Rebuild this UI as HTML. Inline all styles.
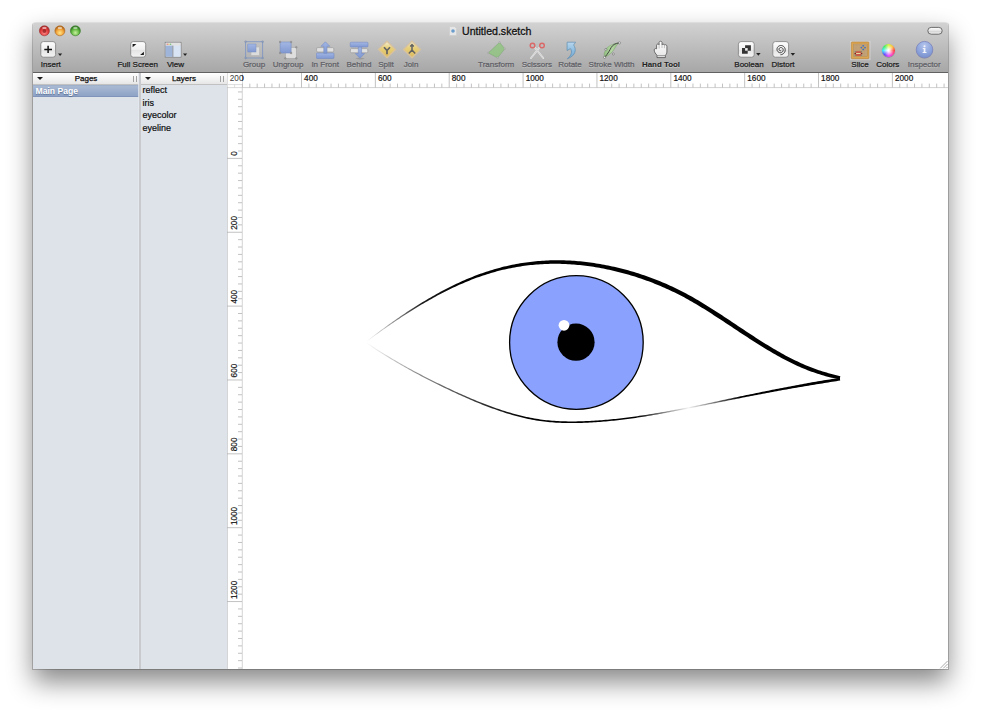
<!DOCTYPE html>
<html><head><meta charset="utf-8">
<style>
*{margin:0;padding:0;box-sizing:border-box}
html,body{width:1000px;height:716px;overflow:hidden;background:#fff;font-family:"Liberation Sans",sans-serif}
.abs{position:absolute}
#shadow{position:absolute;left:33px;top:22px;width:915px;height:647px;box-shadow:0 13px 26px rgba(0,0,0,0.47);border-radius:4px 4px 0 0}
#win{position:absolute;left:33px;top:22px;width:915px;height:647px;overflow:hidden;border-radius:4px 4px 0 0;background:#fff}
#tb{position:absolute;left:33px;top:22px;width:915px;height:51px;background:linear-gradient(#e9e9e9 0px,#d2d2d2 1px,#bdbdbd 50%,#a8a8a8 49px);border-bottom:1px solid #616161;border-radius:4px 4px 0 0}
.lbl{position:absolute;width:80px;font-size:8px;line-height:9px;color:#1c1c1c;-webkit-text-stroke:0.25px currentColor;white-space:nowrap;text-align:center;text-shadow:0 1px 0 rgba(255,255,255,0.35)}
.dis{color:#5f5f66}
.bold{font-weight:bold;color:#222;-webkit-text-stroke:0;font-size:7.9px}
#title{position:absolute;top:24.5px;left:462px;font-size:10.6px;line-height:12px;color:#111;-webkit-text-stroke:0.3px currentColor;text-shadow:0 1px 0 rgba(255,255,255,0.4)}
#pages{position:absolute;left:33px;top:73px;width:106px;height:596px;background:#dee3ea}
#pdiv{position:absolute;left:139px;top:73px;width:1.8px;height:596px;background:#c9cace;box-shadow:-0.8px 0 0 #e4e8ef,0.8px 0 0 #e4e8ef}
#layers{position:absolute;left:140.8px;top:73px;width:87.2px;height:596px;background:#dee3ea;border-right:1px solid #a9abae}
.hdr{position:absolute;left:0;top:0;width:100%;height:11.5px;background:linear-gradient(#ffffff,#f3f3f3 50%,#e6e6e6);border-bottom:1px solid #c1c1c1;font-size:8px;text-align:center;line-height:11px;color:#0c0c0c;-webkit-text-stroke:0.25px currentColor}
.row{position:absolute;left:1.8px;font-size:9px;line-height:10px;color:#0c0c0c;-webkit-text-stroke:0.2px currentColor}
.tri{position:absolute;left:4px;top:4.4px;width:0;height:0;border-left:3px solid transparent;border-right:3px solid transparent;border-top:3.6px solid #1a1a1a}
.grip{position:absolute;right:3.3px;top:3.4px;width:3.4px;height:5.6px;border-left:0.9px solid #a2a2a2;border-right:0.9px solid #a2a2a2}
#sel{position:absolute;left:0;top:11.5px;width:106px;height:12.5px;background:linear-gradient(#a9b9d3,#8ea3c6);border-top:1px solid #9fb0cb;border-bottom:1px solid #7f94b8}
#sel span{position:absolute;left:2.5px;top:0.5px;font-size:8.6px;font-weight:bold;color:#fff;text-shadow:0 1px 1px rgba(40,60,100,0.5);line-height:11px}
</style></head><body>
<div id="shadow"></div>
<div id="win"></div>
<div class="abs" style="left:32.2px;top:22px;width:916.6px;height:647.8px;border-radius:4px 4px 0 0;border:0.8px solid rgba(0,0,0,0.2);border-top-color:rgba(0,0,0,0.08)"></div>
<div id="tb"></div>
<div id="title">Untitled.sketch</div>
<div id="pages"><div class="hdr">Pages<i class="tri"></i><i class="grip" style="right:2.4px"></i></div><div id="sel"><span>Main Page</span></div></div>
<div id="pdiv"></div>
<div id="layers"><div class="hdr">Layers<i class="tri"></i><i class="grip"></i></div>
  <div class="row" style="top:12px">reflect</div>
  <div class="row" style="top:24.6px">iris</div>
  <div class="row" style="top:37.2px">eyecolor</div>
  <div class="row" style="top:49.8px">eyeline</div>
</div>
<div class="lbl " style="left:10.8px;top:60px">Insert</div>
<div class="lbl " style="left:97.7px;top:60px">Full Screen</div>
<div class="lbl " style="left:135.5px;top:60px">View</div>
<div class="lbl dis" style="left:214.0px;top:60px">Group</div>
<div class="lbl dis" style="left:248.0px;top:60px">Ungroup</div>
<div class="lbl dis" style="left:285.2px;top:60px">In Front</div>
<div class="lbl dis" style="left:319.0px;top:60px">Behind</div>
<div class="lbl dis" style="left:346.0px;top:60px">Split</div>
<div class="lbl dis" style="left:371.0px;top:60px">Join</div>
<div class="lbl dis" style="left:456.2px;top:60px">Transform</div>
<div class="lbl dis" style="left:496.8px;top:60px">Scissors</div>
<div class="lbl dis" style="left:530.0px;top:60px">Rotate</div>
<div class="lbl dis" style="left:571.5px;top:60px">Stroke Width</div>
<div class="lbl bold" style="left:621.0px;top:60px">Hand Tool</div>
<div class="lbl " style="left:709.0px;top:60px">Boolean</div>
<div class="lbl " style="left:743.0px;top:60px">Distort</div>
<div class="lbl " style="left:820.0px;top:60px">Slice</div>
<div class="lbl " style="left:847.8px;top:60px">Colors</div>
<div class="lbl dis" style="left:884.2px;top:60px">Inspector</div>
<svg class="abs" style="left:0;top:0" width="1000" height="716" viewBox="0 0 1000 716">
<defs>
  <linearGradient id="btn" x1="0" y1="0" x2="0" y2="1"><stop offset="0" stop-color="#fdfdfd"/><stop offset="0.5" stop-color="#f0f0f0"/><stop offset="0.55" stop-color="#e4e4e4"/><stop offset="1" stop-color="#f4f4f4"/></linearGradient>
  <linearGradient id="blueg" x1="0" y1="0" x2="0" y2="1"><stop offset="0" stop-color="#9fb6ea"/><stop offset="1" stop-color="#7894d6"/></linearGradient>
  <linearGradient id="yel" x1="0" y1="0" x2="0" y2="1"><stop offset="0" stop-color="#faf4e0"/><stop offset="0.3" stop-color="#f0dc8a"/><stop offset="0.4" stop-color="#ecd274"/><stop offset="1" stop-color="#e2bb52"/></linearGradient>
  <linearGradient id="upg" gradientUnits="userSpaceOnUse" x1="366" y1="0" x2="840" y2="0"><stop offset="0" stop-color="#000" stop-opacity="0"/><stop offset="0.12" stop-color="#000" stop-opacity="0.9"/><stop offset="0.2" stop-color="#000"/><stop offset="1" stop-color="#000"/></linearGradient>
  <linearGradient id="log" gradientUnits="userSpaceOnUse" x1="366" y1="0" x2="840" y2="0"><stop offset="0" stop-color="#000" stop-opacity="0"/><stop offset="0.11" stop-color="#000" stop-opacity="0.45"/><stop offset="0.24" stop-color="#000" stop-opacity="0.8"/><stop offset="0.34" stop-color="#000"/><stop offset="0.57" stop-color="#000"/><stop offset="0.68" stop-color="#000" stop-opacity="0.05"/><stop offset="0.79" stop-color="#000"/><stop offset="1" stop-color="#000"/></linearGradient>
  <radialGradient id="red" cx="0.5" cy="0.7" r="0.65"><stop offset="0" stop-color="#ff8a8a"/><stop offset="0.6" stop-color="#e03c3c"/><stop offset="1" stop-color="#a81e1e"/></radialGradient>
  <radialGradient id="ora" cx="0.5" cy="0.7" r="0.6"><stop offset="0" stop-color="#ffe68a"/><stop offset="0.6" stop-color="#f3a43a"/><stop offset="1" stop-color="#b0661a"/></radialGradient>
  <radialGradient id="grn" cx="0.5" cy="0.7" r="0.6"><stop offset="0" stop-color="#c9f0a0"/><stop offset="0.6" stop-color="#66bb44"/><stop offset="1" stop-color="#2f7a1f"/></radialGradient>
  <radialGradient id="insp" cx="0.5" cy="0.25" r="0.75"><stop offset="0" stop-color="#b4c4ec"/><stop offset="0.6" stop-color="#8ea5dc"/><stop offset="1" stop-color="#7890cc"/></radialGradient>
<linearGradient id="rotg" x1="0" y1="0" x2="0" y2="1"><stop offset="0" stop-color="#b8dcf6"/><stop offset="0.5" stop-color="#86bde8"/><stop offset="1" stop-color="#6aa6d8"/></linearGradient>
<linearGradient id="handg" x1="0" y1="0" x2="0" y2="1"><stop offset="0" stop-color="#ffffff"/><stop offset="1" stop-color="#e4e4e4"/></linearGradient>
<linearGradient id="pillg" x1="0" y1="0" x2="0" y2="1"><stop offset="0" stop-color="#ffffff"/><stop offset="0.45" stop-color="#e8e8e8"/><stop offset="0.55" stop-color="#d4d4d4"/><stop offset="1" stop-color="#f4f4f4"/></linearGradient>
<linearGradient id="leafg" x1="0" y1="0" x2="1" y2="0"><stop offset="0" stop-color="#8cc07a"/><stop offset="0.5" stop-color="#b4dca0"/><stop offset="1" stop-color="#86b874"/></linearGradient>
</defs>
<!-- traffic lights -->
<circle cx="44.4" cy="30.8" r="5.0" fill="url(#red)" stroke="#9a3030" stroke-width="0.6"/>
<circle cx="44.4" cy="31" r="1.9" fill="#8f1e1e" opacity="0.75"/>
<ellipse cx="44.4" cy="27.9" rx="2.2" ry="1.2" fill="#fff" opacity="0.55"/>
<circle cx="59.9" cy="30.8" r="5.0" fill="url(#ora)" stroke="#b06a20" stroke-width="0.6"/>
<ellipse cx="59.9" cy="27.9" rx="2.2" ry="1.2" fill="#fff" opacity="0.55"/>
<circle cx="75.4" cy="30.8" r="5.0" fill="url(#grn)" stroke="#3a7a2a" stroke-width="0.6"/>
<ellipse cx="75.4" cy="27.9" rx="2.2" ry="1.2" fill="#fff" opacity="0.5"/>
<!-- toolbar pill -->
<rect x="927.8" y="27.4" width="14.4" height="6.8" rx="3.4" fill="url(#pillg)" stroke="#5f5f5f" stroke-width="0.9"/>
<!-- doc icon -->
<path d="M449.5,26.5h5l2,2v7h-7z" fill="#e6e6e6" stroke="#c8c8c8" stroke-width="0.5"/>
<circle cx="453" cy="31" r="1.8" fill="#6a9ccc"/>
<!-- Insert -->
<rect x="40.8" y="41.6" width="14.8" height="15.6" rx="2.6" fill="url(#btn)" stroke="#7c7c7c" stroke-width="0.8"/>
<path d="M44.3,49.4H52M48.1,45.7V53" stroke="#111" stroke-width="1.5"/>
<path d="M58,53.4h4.2l-2.1,2.6z" fill="#222"/>
<!-- Full screen -->
<rect x="130.7" y="41.6" width="15" height="15.6" rx="2.6" fill="url(#btn)" stroke="#7c7c7c" stroke-width="0.8"/>
<path d="M132.6,43.9h3.8l-3.8,3.3z M143.9,55h-3.8l3.8,-3.3z" fill="#1a1a1a"/>
<!-- View -->
<rect x="165.2" y="42.3" width="15.8" height="14.8" fill="#dfe6f2" stroke="#7a7a7a" stroke-width="0.8"/>
<rect x="165.6" y="42.7" width="15" height="3" fill="#e2e2e2"/>
<circle cx="167.2" cy="44.2" r="0.7" fill="#e07070"/><circle cx="168.9" cy="44.2" r="0.7" fill="#e0c060"/><circle cx="170.6" cy="44.2" r="0.7" fill="#70c070"/>
<rect x="165.6" y="45.7" width="7" height="11" fill="#9eb4d8"/>
<rect x="173.2" y="45.7" width="7.4" height="11" fill="#d8e4f4"/>
<path d="M172.9,45.7v11.2" stroke="#7a7a7a" stroke-width="0.7"/>
<path d="M183,53.4h4.2l-2.1,2.6z" fill="#222"/>
<!-- Group -->
<g opacity="0.85">
<rect x="245.6" y="41.7" width="17" height="16.3" fill="none" stroke="#7d95c4" stroke-width="1"/>
<rect x="251" y="47" width="8.5" height="8.5" fill="#e3e3e3" stroke="#b5b5b5" stroke-width="0.6"/>
<rect x="247.8" y="44" width="8.2" height="8" fill="url(#blueg)" stroke="#6d87c4" stroke-width="0.5"/>
<g fill="#8ea0c0" stroke="#6a7fa8" stroke-width="0.4"><circle cx="245.6" cy="41.7" r="0.9"/><circle cx="262.6" cy="41.7" r="0.9"/><circle cx="245.6" cy="58" r="0.9"/><circle cx="262.6" cy="58" r="0.9"/></g>
</g>
<!-- Ungroup -->
<g opacity="0.85">
<rect x="285.3" y="47.3" width="11" height="11" fill="#e6e6e6" stroke="#a5a5a5" stroke-width="0.7"/>
<rect x="280.1" y="42" width="11" height="11" fill="url(#blueg)" stroke="#6d87c4" stroke-width="0.6"/>
<g fill="#9a9a9a" stroke="#777" stroke-width="0.4"><circle cx="280.1" cy="42" r="0.9"/><circle cx="291.1" cy="42" r="0.9"/><circle cx="280.1" cy="53" r="0.9"/><circle cx="291.1" cy="53" r="0.9"/><circle cx="296.3" cy="47.3" r="0.9"/><circle cx="296.3" cy="58.3" r="0.9"/><circle cx="285.3" cy="58.3" r="0.9"/></g>
</g>
<!-- In Front -->
<g opacity="0.88">
<rect x="316.6" y="47.6" width="17.2" height="4.4" rx="1.2" fill="#e6e6e6" stroke="#9c9c9c" stroke-width="0.8"/>
<rect x="316.4" y="53" width="17.6" height="5.5" rx="1" fill="url(#blueg)" stroke="#6d87c4" stroke-width="0.6"/>
<path d="M323.8,53.2V46.3H321L325.4,41.8L329.8,46.3H327V53.2Z" fill="url(#blueg)" stroke="#6d87c4" stroke-width="0.6" stroke-linejoin="round"/>
</g>
<!-- Behind -->
<g opacity="0.88">
<rect x="350.4" y="48.6" width="17.4" height="4.2" rx="1.2" fill="#e6e6e6" stroke="#9c9c9c" stroke-width="0.8"/>
<ellipse cx="360" cy="58.6" rx="4.5" ry="0.8" fill="#000" opacity="0.15"/>
<path d="M358.3,46.8V53.6H355.3L359.95,58.2L364.6,53.6H361.6V46.8Z" fill="url(#blueg)" stroke="#6d87c4" stroke-width="0.6" stroke-linejoin="round"/>
<rect x="350.2" y="42.2" width="17.8" height="4.8" rx="1" fill="url(#blueg)" stroke="#6d87c4" stroke-width="0.6"/>
</g>
<!-- Split / Join -->
<g opacity="0.9">
<path d="M387,41.3L395.5,49.5L387,57.8L378.5,49.5z" fill="url(#yel)" stroke="#dcc39a" stroke-width="1.3" stroke-linejoin="round"/>
<path d="M387,54.2V50.5M387,50.5L384,47.2M387,50.5L390,47.2" stroke="#5a5a5a" stroke-width="1.7" fill="none"/>
<path d="M412,41.3L420.5,49.5L412,57.8L403.5,49.5z" fill="url(#yel)" stroke="#dcc39a" stroke-width="1.3" stroke-linejoin="round"/>
<path d="M412,45.5V50M412,50L408.8,53.4M412,50L415.2,53.4M410.2,46.5L412,44.6L413.8,46.5" stroke="#5a5a5a" stroke-width="1.5" fill="none"/>
</g>
<!-- Transform -->
<g opacity="0.8">
<path d="M488.2,53L499.6,42.3L504.8,48.8L497.6,57.8z" fill="#8fc57e" stroke="#6e9f62" stroke-width="0.5"/>
<g fill="#c8c8c8" stroke="#888" stroke-width="0.3"><circle cx="499.6" cy="42.3" r="0.8"/><circle cx="504.8" cy="48.8" r="0.8"/><circle cx="497.6" cy="57.8" r="0.8"/><circle cx="488.2" cy="53" r="0.8"/></g>
</g>
<!-- Scissors -->
<g opacity="0.85">
<path d="M531,58L539.5,47.5M543.2,58L534.8,47.5" stroke="#f2f2f2" stroke-width="1.8" stroke-linecap="round"/>
<path d="M531,58L539.5,47.5M543.2,58L534.8,47.5" stroke="#aaa" stroke-width="0.4"/>
<circle cx="532.5" cy="45.5" r="2.3" fill="none" stroke="#e05a5a" stroke-width="1.4"/>
<circle cx="542" cy="45.5" r="2.3" fill="none" stroke="#e05a5a" stroke-width="1.4"/>
</g>
<!-- Rotate -->
<g opacity="0.85">
<path d="M567.1,42.2H575.6L573.6,45C576.5,49,576.2,55.5,567.3,58.8C571.5,55.5,572.6,51.5,570.4,48.6L567.1,50.6Z" fill="url(#rotg)" stroke="#4f86b0" stroke-width="0.7" stroke-linejoin="round"/>
</g>
<!-- Stroke width -->
<g opacity="0.88">
<path d="M604.5,57.5C603.2,51,606.5,44.5,619.5,42.8C614.8,45,615.2,52.5,604.5,57.5Z" fill="url(#leafg)" stroke="#74a066" stroke-width="0.5"/>
<path d="M604.5,57.5C608.5,53,609.8,50,611.2,47.5C612.6,45,615,43.4,619.5,42.8" fill="none" stroke="#333" stroke-width="1"/>
<g fill="#f4f4f4" stroke="#444" stroke-width="0.5"><circle cx="604.6" cy="57.4" r="1.1"/><circle cx="619.4" cy="42.9" r="1.1"/><circle cx="605.9" cy="49.4" r="1"/><circle cx="613.4" cy="54" r="1"/></g>
</g>
<!-- Hand tool -->
<path d="M657,57.6V55.2C655.5,53.8,654.2,51.8,654.2,50C654.2,48.6,655.5,48.2,656.6,48.8V45.2C656.6,43.8,658.8,43.6,659.1,44.8V42.4C659.1,40.9,662,40.9,662,42.4V44.8C662.3,43.9,664.3,44,664.4,45C664.8,44.4,666.9,44.6,666.9,46.2V52C666.9,53.6,666,54.6,665.4,55.2V57.6Z" fill="url(#handg)" stroke="#4a4a4a" stroke-width="0.75" stroke-linejoin="round"/>
<path d="M657.3,55.6H665.1" stroke="#666" stroke-width="0.6"/>
<path d="M659.1,44.8V48.5M662,44.8V48M664.4,45V48.2" stroke="#888" stroke-width="0.5"/>
<!-- Boolean -->
<rect x="738.4" y="41.6" width="15.8" height="15.6" rx="2.6" fill="url(#btn)" stroke="#7c7c7c" stroke-width="0.8"/>
<path d="M745.1,45.3h5.8v5.4h-5.8z M742,48.1h5.7v5.6h-5.7z" fill="#333"/>
<rect x="745.1" y="48.1" width="2.6" height="2.6" fill="#f0f0f0"/>
<path d="M756.1,53.1h4.5l-2.25,2.7z" fill="#222"/>
<!-- Distort -->
<rect x="772.8" y="41.6" width="15.8" height="15.6" rx="2.6" fill="url(#btn)" stroke="#7c7c7c" stroke-width="0.8"/>
<path d="M780.93,50.44 L780.86,50.49 L780.80,50.53 L780.72,50.57 L780.65,50.60 L780.56,50.63 L780.48,50.65 L780.39,50.66 L780.30,50.67 L780.20,50.67 L780.10,50.65 L780.01,50.63 L779.91,50.60 L779.82,50.57 L779.72,50.52 L779.63,50.46 L779.54,50.40 L779.46,50.32 L779.38,50.24 L779.31,50.15 L779.24,50.05 L779.19,49.95 L779.14,49.84 L779.10,49.72 L779.07,49.60 L779.05,49.47 L779.03,49.34 L779.04,49.21 L779.05,49.07 L779.07,48.94 L779.11,48.81 L779.15,48.67 L779.21,48.54 L779.28,48.42 L779.36,48.29 L779.46,48.18 L779.56,48.07 L779.68,47.97 L779.80,47.87 L779.93,47.79 L780.07,47.72 L780.22,47.65 L780.38,47.60 L780.54,47.57 L780.71,47.54 L780.88,47.53 L781.05,47.53 L781.22,47.55 L781.40,47.58 L781.57,47.63 L781.74,47.69 L781.90,47.77 L782.06,47.86 L782.22,47.97 L782.37,48.09 L782.50,48.22 L782.63,48.36 L782.75,48.52 L782.85,48.69 L782.95,48.86 L783.02,49.05 L783.09,49.25 L783.13,49.45 L783.16,49.65 L783.18,49.86 L783.17,50.07 L783.15,50.29 L783.11,50.50 L783.06,50.71 L782.98,50.92 L782.89,51.12 L782.78,51.32 L782.65,51.51 L782.51,51.69 L782.35,51.86 L782.17,52.01 L781.99,52.16 L781.79,52.28 L781.57,52.40 L781.35,52.49 L781.12,52.57 L780.88,52.63 L780.63,52.67 L780.38,52.68 L780.13,52.68 L779.88,52.66 L779.62,52.62 L779.37,52.55 L779.13,52.47 L778.88,52.36 L778.65,52.23 L778.43,52.09 L778.21,51.92 L778.01,51.74 L777.83,51.54 L777.66,51.32 L777.50,51.09 L777.37,50.84 L777.25,50.58 L777.16,50.31 L777.09,50.04 L777.04,49.75 L777.01,49.46 L777.00,49.17 L777.03,48.87 L777.07,48.58 L777.14,48.29 L777.23,48.00 L777.35,47.72 L777.49,47.45 L777.66,47.19 L777.84,46.94 L778.05,46.71 L778.28,46.49 L778.52,46.29 L778.78,46.11 L779.06,45.95 L779.35,45.81 L779.66,45.69 L779.97,45.61 L780.30,45.54 L780.63,45.50 L780.96,45.49 L781.30,45.51 L781.63,45.55 L781.96,45.63 L782.29,45.72 L782.61,45.85 L782.92,46.00 L783.22,46.18 L783.51,46.39 L783.78,46.61 L784.03,46.87 L784.26,47.14 L784.47,47.43 L784.66,47.74 L784.82,48.06 L784.96,48.40 L785.07,48.75 L785.15,49.12 L785.20,49.48 L785.22,49.86 L785.21,50.24 L785.17,50.61 L785.10,50.99 L784.99,51.35 L784.86,51.72 L784.70,52.07 L784.51,52.41 L784.29,52.73 L784.04,53.04 L783.77,53.32 L783.47,53.59 L783.15,53.83 L782.81,54.05 L782.46,54.24 L782.08,54.40 L781.69,54.53 L781.30,54.63 L780.89,54.69" fill="none" stroke="#2e2e2e" stroke-width="1" stroke-linecap="round"/>
<path d="M790.6,53.1h4.5l-2.25,2.7z" fill="#222"/>
<!-- Slice -->
<rect x="850" y="40.8" width="20.6" height="19.4" fill="#dcdcdc" opacity="0.55"/>
<rect x="851.3" y="42" width="17.6" height="16.7" rx="0.8" fill="#dca650" stroke="#b88236" stroke-width="0.6"/>
<rect x="853.2" y="44" width="14" height="12.6" fill="#c9a97e" stroke="#a88350" stroke-width="0.4"/>
<path d="M853.4,45.6H867M853.4,47.2H867M853.4,48.8H867M853.4,50.4H867M853.4,52H867M853.4,53.6H867M853.4,55.2H867M854.8,44V56.6M856.4,44V56.6M858,44V56.6M859.6,44V56.6M861.2,44V56.6M862.8,44V56.6M864.4,44V56.6M866,44V56.6" stroke="#b4936a" stroke-width="0.3"/>
<rect x="855.6" y="51.2" width="5.6" height="4.7" fill="#c85848"/>
<rect x="855.6" y="53" width="5.6" height="1" fill="#e4dca0"/>
<circle cx="855.3" cy="53.5" r="0.85" fill="#8a1a1a"/><circle cx="861.5" cy="53.5" r="0.85" fill="#8a1a1a"/>
<g fill="#7a8a78"><circle cx="855.3" cy="51.8" r="0.7"/><circle cx="861.5" cy="51.8" r="0.7"/><circle cx="855.3" cy="55.2" r="0.7"/><circle cx="861.5" cy="55.2" r="0.7"/></g>
<rect x="862.4" y="46.8" width="1.6" height="1.6" fill="#e8a030"/>
<g fill="#3f72c0"><circle cx="863.2" cy="45.8" r="0.9"/><circle cx="861.4" cy="47.6" r="0.9"/><circle cx="865" cy="47.6" r="0.9"/><circle cx="863.2" cy="49.4" r="0.9"/></g>
<!-- Colors -->

<!-- Inspector -->
<circle cx="924.5" cy="50.2" r="8.4" fill="#000" opacity="0.12"/><circle cx="924.5" cy="49.7" r="8.3" fill="url(#insp)" stroke="#7c84bc" stroke-width="0.8"/>
<g fill="#f2f4fa"><circle cx="924.5" cy="46.3" r="1.05"/><path d="M922.8,48.1H925.4V52.1H926.5V53H922.6V52.1H923.7V48.9H922.8Z"/></g>

<!-- rulers -->
<rect x="227.5" y="73" width="14.5" height="596" fill="#fff"/>
<rect x="242" y="73" width="706" height="15" fill="#fff"/>
<path d="M242.3,73V669" stroke="#c9c9c9" stroke-width="0.8"/>
<path d="M227,87.6H948" stroke="#c4c4c4" stroke-width="0.8"/>
<path d="M227.64,73V87.5M242.41,83.6V87.5M249.80,83.6V87.5M257.18,83.6V87.5M264.57,83.6V87.5M271.96,83.6V87.5M279.34,83.6V87.5M286.73,83.6V87.5M294.11,83.6V87.5M301.50,73V87.5M308.89,83.6V87.5M316.27,83.6V87.5M323.66,83.6V87.5M331.04,83.6V87.5M338.43,83.6V87.5M345.82,83.6V87.5M353.20,83.6V87.5M360.59,83.6V87.5M367.97,83.6V87.5M375.36,73V87.5M382.75,83.6V87.5M390.13,83.6V87.5M397.52,83.6V87.5M404.90,83.6V87.5M412.29,83.6V87.5M419.68,83.6V87.5M427.06,83.6V87.5M434.45,83.6V87.5M441.83,83.6V87.5M449.22,73V87.5M456.61,83.6V87.5M463.99,83.6V87.5M471.38,83.6V87.5M478.76,83.6V87.5M486.15,83.6V87.5M493.54,83.6V87.5M500.92,83.6V87.5M508.31,83.6V87.5M515.69,83.6V87.5M523.08,73V87.5M530.47,83.6V87.5M537.85,83.6V87.5M545.24,83.6V87.5M552.62,83.6V87.5M560.01,83.6V87.5M567.40,83.6V87.5M574.78,83.6V87.5M582.17,83.6V87.5M589.55,83.6V87.5M596.94,73V87.5M604.33,83.6V87.5M611.71,83.6V87.5M619.10,83.6V87.5M626.48,83.6V87.5M633.87,83.6V87.5M641.26,83.6V87.5M648.64,83.6V87.5M656.03,83.6V87.5M663.41,83.6V87.5M670.80,73V87.5M678.19,83.6V87.5M685.57,83.6V87.5M692.96,83.6V87.5M700.34,83.6V87.5M707.73,83.6V87.5M715.12,83.6V87.5M722.50,83.6V87.5M729.89,83.6V87.5M737.27,83.6V87.5M744.66,73V87.5M752.05,83.6V87.5M759.43,83.6V87.5M766.82,83.6V87.5M774.20,83.6V87.5M781.59,83.6V87.5M788.98,83.6V87.5M796.36,83.6V87.5M803.75,83.6V87.5M811.13,83.6V87.5M818.52,73V87.5M825.91,83.6V87.5M833.29,83.6V87.5M840.68,83.6V87.5M848.06,83.6V87.5M855.45,83.6V87.5M862.84,83.6V87.5M870.22,83.6V87.5M877.61,83.6V87.5M884.99,83.6V87.5M892.38,73V87.5M899.77,83.6V87.5M907.15,83.6V87.5M914.54,83.6V87.5M921.92,83.6V87.5M929.31,83.6V87.5M936.70,83.6V87.5M944.08,83.6V87.5" stroke="#b3b3b3" stroke-width="0.8"/>
<path d="M238,91.93H242M238,99.31H242M238,106.70H242M238,114.08H242M238,121.47H242M238,128.86H242M238,136.24H242M238,143.63H242M238,151.01H242M227,158.40H242M238,165.79H242M238,173.17H242M238,180.56H242M238,187.94H242M238,195.33H242M238,202.72H242M238,210.10H242M238,217.49H242M238,224.87H242M227,232.26H242M238,239.65H242M238,247.03H242M238,254.42H242M238,261.80H242M238,269.19H242M238,276.58H242M238,283.96H242M238,291.35H242M238,298.73H242M227,306.12H242M238,313.51H242M238,320.89H242M238,328.28H242M238,335.66H242M238,343.05H242M238,350.44H242M238,357.82H242M238,365.21H242M238,372.59H242M227,379.98H242M238,387.37H242M238,394.75H242M238,402.14H242M238,409.52H242M238,416.91H242M238,424.30H242M238,431.68H242M238,439.07H242M238,446.45H242M227,453.84H242M238,461.23H242M238,468.61H242M238,476.00H242M238,483.38H242M238,490.77H242M238,498.16H242M238,505.54H242M238,512.93H242M238,520.31H242M227,527.70H242M238,535.09H242M238,542.47H242M238,549.86H242M238,557.24H242M238,564.63H242M238,572.02H242M238,579.40H242M238,586.79H242M238,594.17H242M227,601.56H242M238,608.95H242M238,616.33H242M238,623.72H242M238,631.10H242M238,638.49H242M238,645.88H242M238,653.26H242M238,660.65H242M238,668.03H242" stroke="#b3b3b3" stroke-width="0.8"/>
<g font-family="Liberation Sans" font-size="8.2" fill="#151515" stroke="#151515" stroke-width="0.2"><text x="230.2" y="81.3">200</text><text x="304.1" y="81.3">400</text><text x="378.0" y="81.3">600</text><text x="451.8" y="81.3">800</text><text x="525.7" y="81.3">1000</text><text x="599.5" y="81.3">1200</text><text x="673.4" y="81.3">1400</text><text x="747.3" y="81.3">1600</text><text x="821.1" y="81.3">1800</text><text x="895.0" y="81.3">2000</text></g>
<g font-family="Liberation Sans" font-size="8.2" fill="#151515" stroke="#151515" stroke-width="0.2"><text transform="translate(236.5,155.8) rotate(-90)">0</text><text transform="translate(236.5,229.7) rotate(-90)">200</text><text transform="translate(236.5,303.5) rotate(-90)">400</text><text transform="translate(236.5,377.4) rotate(-90)">600</text><text transform="translate(236.5,451.2) rotate(-90)">800</text><text transform="translate(236.5,525.1) rotate(-90)">1000</text><text transform="translate(236.5,599.0) rotate(-90)">1200</text></g>
<rect x="227.5" y="73" width="14.5" height="14.2" fill="#fff"/>
<path d="M227.5,84.6H242" stroke="#cfcfcf" stroke-width="0.7"/><path d="M234.6,84.6V87.5M242.3,84.6V88" stroke="#c8c8c8" stroke-width="0.6"/>
<text x="229.8" y="81.3" font-family="Liberation Sans" font-size="8.2" fill="#3a3a3a">200</text>

<!-- eye -->
<circle cx="576.4" cy="342.5" r="66.8" fill="#8aa1fd" stroke="#000" stroke-width="1.3"/>
<circle cx="576" cy="342.2" r="18.6" fill="#000"/>
<circle cx="564" cy="325.3" r="5.4" fill="#fff"/>
<path d="M365.65,342.46 L367.65,340.96 L369.64,339.47 L371.64,338.00 L373.64,336.53 L375.63,335.08 L377.63,333.63 L379.63,332.19 L381.62,330.77 L383.62,329.35 L385.61,327.94 L387.61,326.55 L389.61,325.17 L391.60,323.79 L393.60,322.43 L395.59,321.08 L397.59,319.74 L399.58,318.42 L401.58,317.10 L403.57,315.79 L405.56,314.50 L407.55,313.22 L409.54,311.95 L411.53,310.69 L413.52,309.45 L415.52,308.22 L417.51,307.00 L419.50,305.80 L421.49,304.61 L423.48,303.43 L425.47,302.27 L427.46,301.13 L429.45,299.99 L431.44,298.88 L433.42,297.77 L435.41,296.69 L437.40,295.61 L439.39,294.56 L441.38,293.51 L443.37,292.49 L445.35,291.48 L447.34,290.48 L449.33,289.50 L451.31,288.54 L453.30,287.60 L455.28,286.67 L457.27,285.76 L459.25,284.86 L461.24,283.99 L463.22,283.13 L465.21,282.29 L467.19,281.46 L469.18,280.66 L471.16,279.87 L473.14,279.10 L475.12,278.35 L477.10,277.62 L479.09,276.91 L481.07,276.21 L483.05,275.54 L485.03,274.88 L487.01,274.25 L488.98,273.63 L490.96,273.03 L492.94,272.46 L494.92,271.90 L496.90,271.36 L498.87,270.85 L500.85,270.35 L502.83,269.87 L504.80,269.41 L506.78,268.96 L508.76,268.54 L510.73,268.14 L512.71,267.75 L514.68,267.38 L516.65,267.04 L518.63,266.71 L520.60,266.39 L522.58,266.10 L524.55,265.83 L526.52,265.57 L528.50,265.33 L530.47,265.11 L532.44,264.91 L534.41,264.73 L536.39,264.56 L538.36,264.41 L540.33,264.28 L542.30,264.16 L544.27,264.07 L546.24,263.99 L548.21,263.92 L550.18,263.87 L552.15,263.84 L554.12,263.82 L556.09,263.81 L558.06,263.83 L560.03,263.86 L562.01,263.91 L563.98,263.97 L565.95,264.05 L567.92,264.15 L569.89,264.27 L571.86,264.40 L573.83,264.54 L575.80,264.70 L577.77,264.88 L579.74,265.08 L581.71,265.28 L583.68,265.51 L585.65,265.75 L587.62,266.01 L589.59,266.28 L591.56,266.57 L593.53,266.87 L595.50,267.18 L597.47,267.52 L599.44,267.86 L601.41,268.23 L603.38,268.60 L605.35,269.00 L607.32,269.40 L609.29,269.82 L611.26,270.26 L613.23,270.71 L615.20,271.17 L617.17,271.65 L619.14,272.15 L621.11,272.65 L623.08,273.18 L625.05,273.71 L627.02,274.26 L628.99,274.83 L630.96,275.41 L632.93,276.01 L634.90,276.62 L636.87,277.25 L638.84,277.90 L640.81,278.56 L642.77,279.23 L644.74,279.93 L646.71,280.63 L648.68,281.36 L650.65,282.10 L652.62,282.86 L654.59,283.63 L656.56,284.42 L658.53,285.23 L660.50,286.05 L662.46,286.89 L664.43,287.75 L666.40,288.63 L668.37,289.53 L670.34,290.44 L672.31,291.38 L674.28,292.33 L676.25,293.30 L678.22,294.29 L680.19,295.30 L682.16,296.33 L684.13,297.37 L686.10,298.44 L688.07,299.53 L690.04,300.63 L692.01,301.76 L693.98,302.90 L695.95,304.06 L697.93,305.24 L699.90,306.43 L701.87,307.64 L703.85,308.86 L705.82,310.09 L707.80,311.33 L709.78,312.59 L711.76,313.86 L713.73,315.13 L715.71,316.42 L717.69,317.71 L719.67,319.01 L721.66,320.31 L723.64,321.61 L725.63,322.92 L727.62,324.23 L729.60,325.55 L731.59,326.86 L733.58,328.18 L735.57,329.50 L737.56,330.81 L739.55,332.13 L741.54,333.44 L743.53,334.75 L745.52,336.05 L747.51,337.35 L749.50,338.64 L751.49,339.93 L753.49,341.21 L755.48,342.48 L757.48,343.74 L759.47,344.99 L761.47,346.24 L763.46,347.47 L765.46,348.68 L767.45,349.89 L769.45,351.08 L771.45,352.26 L773.45,353.42 L775.45,354.57 L777.45,355.70 L779.45,356.81 L781.45,357.91 L783.45,358.98 L785.45,360.04 L787.45,361.08 L789.45,362.09 L791.46,363.09 L793.46,364.06 L795.47,365.01 L797.47,365.94 L799.48,366.84 L801.49,367.70 L803.50,368.55 L805.51,369.36 L807.52,370.15 L809.53,370.91 L811.54,371.65 L813.55,372.37 L815.56,373.05 L817.57,373.72 L819.58,374.36 L821.59,374.97 L823.60,375.56 L825.60,376.13 L827.61,376.68 L829.62,377.20 L831.63,377.67 L833.64,378.12 L835.66,378.55 L837.67,378.96 L839.67,379.35 L840.33,376.22 L838.36,375.76 L836.40,375.28 L834.44,374.78 L832.49,374.26 L830.53,373.72 L828.56,373.18 L826.60,372.62 L824.64,372.04 L822.68,371.43 L820.71,370.80 L818.75,370.15 L816.79,369.47 L814.83,368.77 L812.87,368.05 L810.91,367.30 L808.95,366.53 L806.99,365.73 L805.03,364.91 L803.07,364.06 L801.11,363.18 L799.14,362.29 L797.18,361.37 L795.21,360.43 L793.25,359.47 L791.28,358.48 L789.31,357.47 L787.34,356.44 L785.37,355.39 L783.40,354.32 L781.43,353.23 L779.46,352.12 L777.49,350.99 L775.52,349.85 L773.55,348.69 L771.57,347.52 L769.60,346.33 L767.63,345.12 L765.65,343.91 L763.68,342.68 L761.70,341.44 L759.73,340.19 L757.75,338.93 L755.77,337.65 L753.79,336.37 L751.82,335.08 L749.84,333.79 L747.86,332.49 L745.88,331.18 L743.90,329.86 L741.92,328.55 L739.94,327.23 L737.96,325.90 L735.97,324.58 L733.99,323.25 L732.01,321.93 L730.02,320.60 L728.04,319.28 L726.06,317.96 L724.07,316.64 L722.08,315.33 L720.10,314.03 L718.10,312.74 L716.11,311.45 L714.12,310.17 L712.13,308.90 L710.13,307.64 L708.14,306.39 L706.14,305.15 L704.15,303.93 L702.15,302.71 L700.15,301.51 L698.16,300.33 L696.16,299.16 L694.16,298.01 L692.16,296.87 L690.16,295.76 L688.16,294.66 L686.16,293.58 L684.16,292.52 L682.15,291.49 L680.15,290.47 L678.15,289.47 L676.15,288.49 L674.15,287.53 L672.15,286.58 L670.15,285.66 L668.14,284.76 L666.14,283.87 L664.14,283.00 L662.14,282.15 L660.14,281.32 L658.14,280.50 L656.14,279.71 L654.14,278.93 L652.13,278.17 L650.13,277.42 L648.13,276.70 L646.13,275.99 L644.13,275.30 L642.12,274.63 L640.12,273.97 L638.12,273.33 L636.12,272.71 L634.12,272.10 L632.12,271.51 L630.11,270.93 L628.11,270.37 L626.11,269.82 L624.11,269.29 L622.11,268.77 L620.11,268.27 L618.11,267.79 L616.11,267.32 L614.11,266.86 L612.11,266.42 L610.11,265.99 L608.11,265.57 L606.11,265.18 L604.11,264.79 L602.11,264.42 L600.11,264.07 L598.11,263.73 L596.11,263.41 L594.11,263.10 L592.11,262.80 L590.10,262.53 L588.10,262.26 L586.10,262.02 L584.10,261.79 L582.10,261.57 L580.10,261.37 L578.10,261.19 L576.10,261.02 L574.10,260.87 L572.10,260.74 L570.10,260.62 L568.10,260.52 L566.10,260.43 L564.10,260.37 L562.10,260.31 L560.09,260.28 L558.09,260.26 L556.09,260.26 L554.09,260.27 L552.09,260.31 L550.09,260.36 L548.09,260.43 L546.09,260.52 L544.09,260.63 L542.09,260.75 L540.09,260.90 L538.09,261.06 L536.10,261.24 L534.10,261.44 L532.10,261.66 L530.10,261.89 L528.10,262.14 L526.10,262.41 L524.11,262.70 L522.11,263.01 L520.11,263.34 L518.12,263.68 L516.12,264.04 L514.12,264.43 L512.13,264.83 L510.13,265.25 L508.14,265.68 L506.14,266.14 L504.15,266.62 L502.15,267.11 L500.16,267.63 L498.16,268.16 L496.17,268.72 L494.18,269.29 L492.18,269.89 L490.19,270.50 L488.20,271.13 L486.21,271.79 L484.22,272.46 L482.23,273.15 L480.24,273.86 L478.25,274.60 L476.26,275.35 L474.27,276.11 L472.28,276.90 L470.29,277.71 L468.30,278.53 L466.31,279.37 L464.33,280.23 L462.34,281.11 L460.35,282.00 L458.37,282.92 L456.38,283.85 L454.40,284.79 L452.41,285.75 L450.43,286.73 L448.44,287.73 L446.46,288.74 L444.48,289.77 L442.49,290.81 L440.51,291.87 L438.53,292.95 L436.54,294.04 L434.56,295.14 L432.58,296.27 L430.60,297.40 L428.62,298.55 L426.64,299.72 L424.65,300.89 L422.67,302.09 L420.69,303.29 L418.71,304.51 L416.73,305.75 L414.75,306.99 L412.77,308.26 L410.79,309.53 L408.81,310.82 L406.83,312.11 L404.86,313.43 L402.88,314.75 L400.90,316.08 L398.92,317.43 L396.94,318.80 L394.97,320.17 L392.99,321.56 L391.02,322.96 L389.04,324.36 L387.07,325.78 L385.09,327.21 L383.12,328.65 L381.14,330.10 L379.17,331.57 L377.19,333.04 L375.22,334.52 L373.25,336.01 L371.27,337.51 L369.30,339.02 L367.33,340.53 L365.35,342.06Z" fill="url(#upg)"/>
<path d="M365.25,342.58 L367.23,343.93 L369.22,345.27 L371.20,346.59 L373.19,347.90 L375.17,349.20 L377.15,350.49 L379.14,351.76 L381.12,353.02 L383.11,354.26 L385.09,355.50 L387.08,356.72 L389.06,357.94 L391.05,359.14 L393.03,360.33 L395.02,361.50 L397.00,362.67 L398.99,363.83 L400.97,364.97 L402.96,366.11 L404.94,367.23 L406.93,368.35 L408.91,369.46 L410.90,370.55 L412.88,371.64 L414.87,372.72 L416.85,373.78 L418.84,374.84 L420.82,375.89 L422.80,376.94 L424.79,377.97 L426.77,379.00 L428.76,380.01 L430.74,381.02 L432.73,382.03 L434.71,383.02 L436.70,384.01 L438.68,384.99 L440.67,385.96 L442.65,386.93 L444.64,387.89 L446.62,388.85 L448.61,389.80 L450.59,390.74 L452.58,391.67 L454.56,392.60 L456.55,393.52 L458.53,394.43 L460.52,395.33 L462.51,396.22 L464.49,397.11 L466.48,397.98 L468.46,398.85 L470.45,399.71 L472.44,400.55 L474.42,401.39 L476.41,402.22 L478.40,403.03 L480.38,403.84 L482.37,404.63 L484.36,405.41 L486.35,406.18 L488.33,406.93 L490.32,407.68 L492.31,408.41 L494.30,409.12 L496.29,409.83 L498.27,410.52 L500.26,411.19 L502.25,411.85 L504.24,412.50 L506.23,413.13 L508.22,413.74 L510.21,414.34 L512.20,414.92 L514.19,415.49 L516.18,416.04 L518.17,416.56 L520.16,417.08 L522.15,417.57 L524.15,418.04 L526.14,418.49 L528.13,418.92 L530.12,419.34 L532.12,419.73 L534.11,420.09 L536.10,420.44 L538.10,420.77 L540.09,421.07 L542.09,421.34 L544.08,421.59 L546.08,421.82 L548.07,422.02 L550.06,422.21 L552.06,422.37 L554.05,422.52 L556.04,422.65 L558.04,422.75 L560.03,422.85 L562.02,422.92 L564.01,422.98 L566.01,423.02 L568.00,423.05 L569.99,423.06 L571.98,423.06 L573.97,423.05 L575.96,423.02 L577.95,422.99 L579.94,422.94 L581.93,422.88 L583.92,422.81 L585.91,422.73 L587.90,422.64 L589.89,422.55 L591.88,422.44 L593.86,422.32 L595.85,422.19 L597.84,422.06 L599.83,421.91 L601.82,421.76 L603.81,421.59 L605.80,421.42 L607.78,421.24 L609.77,421.05 L611.76,420.85 L613.75,420.64 L615.74,420.43 L617.72,420.20 L619.71,419.97 L621.70,419.74 L623.69,419.49 L625.68,419.24 L627.66,418.98 L629.65,418.72 L631.64,418.45 L633.62,418.17 L635.61,417.89 L637.60,417.60 L639.59,417.30 L641.57,417.00 L643.56,416.69 L645.55,416.38 L647.53,416.06 L649.52,415.73 L651.50,415.40 L653.49,415.07 L655.48,414.73 L657.46,414.38 L659.45,414.04 L661.44,413.68 L663.42,413.33 L665.41,412.96 L667.39,412.60 L669.38,412.23 L671.37,411.86 L673.35,411.48 L675.34,411.10 L677.32,410.72 L679.31,410.33 L681.29,409.95 L683.28,409.55 L685.26,409.16 L687.25,408.76 L689.23,408.37 L691.22,407.96 L693.20,407.56 L695.19,407.16 L697.17,406.75 L699.16,406.34 L701.15,405.94 L703.13,405.55 L705.12,405.15 L707.11,404.75 L709.10,404.35 L711.09,403.95 L713.07,403.55 L715.06,403.15 L717.05,402.75 L719.04,402.35 L721.03,401.95 L723.01,401.55 L725.00,401.16 L726.99,400.76 L728.98,400.36 L730.96,399.96 L732.95,399.56 L734.94,399.17 L736.92,398.77 L738.91,398.38 L740.90,397.99 L742.89,397.60 L744.87,397.21 L746.86,396.82 L748.85,396.43 L750.83,396.04 L752.82,395.66 L754.81,395.28 L756.80,394.89 L758.78,394.51 L760.77,394.13 L762.76,393.76 L764.74,393.39 L766.73,393.01 L768.72,392.64 L770.71,392.28 L772.69,391.91 L774.68,391.55 L776.67,391.18 L778.66,390.82 L780.64,390.46 L782.63,390.11 L784.62,389.75 L786.60,389.40 L788.59,389.05 L790.58,388.70 L792.56,388.35 L794.55,388.00 L796.54,387.66 L798.52,387.32 L800.51,386.98 L802.50,386.65 L804.48,386.31 L806.47,385.98 L808.46,385.65 L810.44,385.33 L812.43,385.00 L814.42,384.68 L816.40,384.36 L818.39,384.05 L820.37,383.73 L822.36,383.40 L824.34,383.07 L826.32,382.74 L828.30,382.41 L830.28,382.09 L832.27,381.77 L834.25,381.45 L836.23,381.13 L838.21,380.82 L840.19,380.51 L839.81,377.94 L837.82,378.23 L835.83,378.52 L833.84,378.82 L831.85,379.12 L829.86,379.42 L827.87,379.72 L825.89,380.03 L823.90,380.34 L821.91,380.66 L819.92,380.97 L817.93,381.31 L815.95,381.66 L813.96,382.01 L811.98,382.36 L810.00,382.71 L808.01,383.07 L806.03,383.43 L804.04,383.79 L802.06,384.15 L800.07,384.52 L798.09,384.89 L796.11,385.26 L794.12,385.63 L792.14,386.00 L790.15,386.38 L788.17,386.76 L786.19,387.14 L784.20,387.52 L782.22,387.91 L780.24,388.29 L778.25,388.68 L776.27,389.07 L774.28,389.47 L772.30,389.86 L770.32,390.26 L768.33,390.65 L766.35,391.05 L764.37,391.45 L762.38,391.86 L760.40,392.26 L758.42,392.66 L756.43,393.07 L754.45,393.47 L752.47,393.88 L750.48,394.29 L748.50,394.70 L746.52,395.11 L744.53,395.52 L742.55,395.93 L740.57,396.35 L738.58,396.76 L736.60,397.18 L734.62,397.60 L732.63,398.01 L730.65,398.43 L728.67,398.85 L726.68,399.27 L724.70,399.70 L722.72,400.12 L720.73,400.54 L718.75,400.96 L716.77,401.39 L714.78,401.81 L712.80,402.23 L710.82,402.65 L708.83,403.08 L706.85,403.50 L704.87,403.92 L702.89,404.34 L700.90,404.75 L698.92,405.16 L696.93,405.56 L694.95,405.96 L692.96,406.36 L690.98,406.75 L688.99,407.15 L687.01,407.54 L685.02,407.92 L683.04,408.31 L681.05,408.69 L679.06,409.07 L677.08,409.45 L675.09,409.83 L673.11,410.20 L671.12,410.57 L669.14,410.93 L667.15,411.29 L665.17,411.65 L663.18,412.00 L661.20,412.35 L659.22,412.69 L657.23,413.03 L655.25,413.37 L653.26,413.70 L651.28,414.03 L649.29,414.35 L647.31,414.66 L645.33,414.97 L643.34,415.28 L641.36,415.58 L639.37,415.87 L637.39,416.16 L635.41,416.44 L633.42,416.72 L631.44,416.99 L629.45,417.25 L627.47,417.51 L625.49,417.76 L623.50,418.00 L621.52,418.24 L619.54,418.46 L617.56,418.68 L615.57,418.90 L613.59,419.10 L611.61,419.30 L609.62,419.49 L607.64,419.67 L605.66,419.85 L603.68,420.01 L601.69,420.17 L599.71,420.32 L597.73,420.46 L595.75,420.59 L593.77,420.71 L591.79,420.83 L589.80,420.93 L587.82,421.03 L585.84,421.11 L583.86,421.19 L581.88,421.25 L579.90,421.31 L577.92,421.35 L575.94,421.38 L573.96,421.41 L571.97,421.42 L570.00,421.41 L568.02,421.40 L566.04,421.36 L564.06,421.32 L562.08,421.26 L560.10,421.18 L558.12,421.09 L556.14,420.98 L554.17,420.85 L552.19,420.70 L550.21,420.53 L548.24,420.34 L546.26,420.14 L544.28,419.91 L542.31,419.66 L540.33,419.38 L538.36,419.09 L536.38,418.78 L534.40,418.45 L532.42,418.09 L530.45,417.71 L528.47,417.31 L526.49,416.89 L524.51,416.45 L522.53,415.99 L520.55,415.51 L518.57,415.01 L516.59,414.49 L514.61,413.96 L512.63,413.41 L510.65,412.84 L508.67,412.25 L506.69,411.65 L504.71,411.03 L502.73,410.39 L500.75,409.75 L498.76,409.08 L496.78,408.40 L494.80,407.71 L492.82,407.01 L490.83,406.29 L488.85,405.55 L486.87,404.81 L484.88,404.05 L482.90,403.28 L480.92,402.50 L478.93,401.71 L476.95,400.90 L474.97,400.09 L472.98,399.26 L471.00,398.43 L469.01,397.58 L467.03,396.72 L465.04,395.86 L463.06,394.98 L461.07,394.10 L459.09,393.21 L457.10,392.31 L455.12,391.40 L453.13,390.48 L451.15,389.56 L449.16,388.62 L447.18,387.69 L445.19,386.74 L443.20,385.79 L441.22,384.83 L439.23,383.87 L437.25,382.90 L435.26,381.92 L433.27,380.94 L431.29,379.94 L429.30,378.94 L427.32,377.94 L425.33,376.92 L423.35,375.90 L421.36,374.86 L419.37,373.82 L417.39,372.78 L415.40,371.72 L413.42,370.65 L411.43,369.57 L409.44,368.49 L407.46,367.39 L405.47,366.29 L403.49,365.17 L401.50,364.05 L399.52,362.91 L397.53,361.77 L395.54,360.61 L393.56,359.44 L391.57,358.26 L389.59,357.07 L387.60,355.87 L385.61,354.66 L383.63,353.43 L381.64,352.19 L379.66,350.94 L377.67,349.68 L375.68,348.41 L373.70,347.12 L371.71,345.82 L369.73,344.51 L367.74,343.18 L365.75,341.84Z" fill="url(#log)"/>

<!-- resize grip -->
<path d="M940.3,668.3L947.6,661M943.3,668.3L947.6,664M946.2,668.3L947.6,666.9" stroke="#8a8a8a" stroke-width="0.8"/>
<path d="M941.2,668.6L947.8,662M944.2,668.6L947.8,665" stroke="#fff" stroke-width="0.6"/>
</svg>
<div class="abs" style="left:881.8px;top:43.7px;width:13.2px;height:13.2px;border-radius:50%;background:radial-gradient(circle,#fff 0,rgba(255,255,255,0.9) 12%,rgba(255,255,255,0) 62%),conic-gradient(from 0deg,#d8f040,#ffc040 45deg,#ff3c3c 90deg,#ff40b0 135deg,#e040ff 180deg,#6048ff 225deg,#30e8ff 270deg,#40f060 315deg,#d8f040 360deg);box-shadow:0 0.5px 1px rgba(0,0,0,0.35)"></div>
</body></html>
